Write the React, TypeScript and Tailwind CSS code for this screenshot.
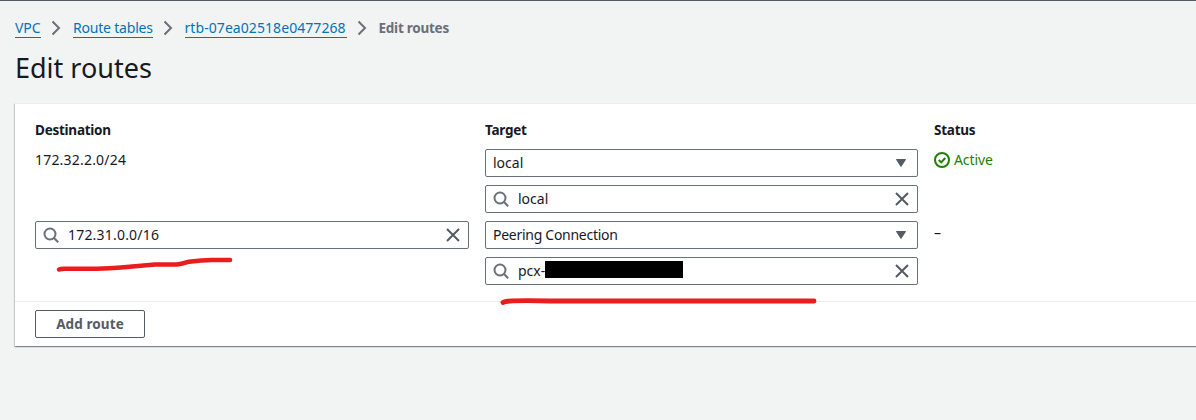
import type { ReactNode } from "react";

function Crumb({ children, className }: { children: string; className: string }) {
  return (
    <>
      <a className={`h-[19px] border-b border-[#0073bb] text-[14px] leading-[18px] whitespace-nowrap text-[#0073bb] ${className}`}>{children}</a>
      <svg className="mt-px mr-[12px] ml-[9px] h-4 w-[11px] shrink-0" viewBox="0 0 11 16" fill="none" stroke="#687078" strokeWidth="2">
        <path d="M2.5 1.5 9 8 2.5 14.5" />
      </svg>
    </>
  );
}

function SearchIcon() {
  return (
    <svg className="mr-[9px] h-4 w-4 shrink-0" viewBox="0 0 16 16" fill="none" stroke="#687078" strokeWidth="2">
      <circle cx="7" cy="7" r="5.5" />
      <path d="m11 11 4.2 4.2" />
    </svg>
  );
}

function CloseIcon() {
  return (
    <svg className="ml-auto h-4 w-4 shrink-0" viewBox="0 0 16 16" fill="none" stroke="#545b64" strokeWidth="2">
      <path d="m2 2 12 12M14 2 2 14" />
    </svg>
  );
}

function SearchField({ children }: { children: ReactNode }) {
  return (
    <div className="flex h-7 w-full shrink-0 items-center rounded-[2px] border border-[#687078] bg-white pr-[7px] pl-[7px] text-[14px] leading-5">
      <SearchIcon />
      {children}
      <CloseIcon />
    </div>
  );
}

function SelectField({ children }: { children: ReactNode }) {
  return (
    <div className="flex h-7 w-full shrink-0 items-center rounded-[2px] border border-[#687078] bg-white pr-2 pl-[7px] text-[14px] leading-5">
      {children}
      <svg className="ml-auto h-4 w-4 shrink-0" viewBox="0 0 16 16">
        <path d="M3.5 4.5h9L8 11.5z" fill="#545b64" stroke="#545b64" strokeWidth="1" strokeLinejoin="round" />
      </svg>
    </div>
  );
}

export default function App() {
  return (
    <main className="relative h-[420px] w-[1196px] overflow-hidden border-t border-[#545b64] bg-[#f2f3f3] pl-[15px] font-['Noto_Sans',sans-serif] text-[13.5px] text-[#16191f]">
      <nav className="mt-[18px] flex h-[19px]">
        <Crumb className="w-[26px] tracking-[-0.1px]">VPC</Crumb>
        <Crumb className="w-[79.5px] tracking-[-0.2px]">Route tables</Crumb>
        <Crumb className="w-[162px] tracking-[0.07px]">rtb-07ea02518e0477268</Crumb>
        <span className="leading-[18px] font-bold tracking-[-0.25px] whitespace-nowrap text-[#687078]">Edit routes</span>
      </nav>
      <h1 className="mt-[12px] h-[36px] text-[27px] leading-[36px]">Edit routes</h1>
      <section className="mt-[17px] h-[243px] w-[1200px] border-t border-[#eaeded] bg-white shadow-[0_1px_1px_0_rgba(0,28,36,0.3),1px_1px_1px_0_rgba(0,28,36,0.15),-1px_1px_1px_0_rgba(0,28,36,0.15)]">
        <div className="grid h-[197px] grid-cols-[434px_433px_200px] grid-rows-[20px_64px_64px] gap-x-4 gap-y-2 pt-[16px] pl-5">
          <b className="leading-5 tracking-[-0.25px]">Destination</b>
          <b className="leading-5 tracking-[-0.25px]">Target</b>
          <b className="leading-5 tracking-[-0.25px]">Status</b>
          <div className="pt-0.5 text-[14px] leading-5 tracking-[0.2px]">172.32.2.0/24</div>
          <div className="flex flex-col gap-2 pt-[1px]">
            <SelectField>local</SelectField>
            <SearchField>local</SearchField>
          </div>
          <div className="flex h-[22px] items-center pt-0.5 text-[14px] leading-5 tracking-[-0.1px] text-[#1d8102]">
            <svg className="mr-1 h-4 w-4" viewBox="0 0 16 16" fill="none" stroke="#1d8102" strokeWidth="2">
              <circle cx="8" cy="8" r="7" />
              <path d="m4.8 8 2.4 2.4 4-4.4" />
            </svg>
            <span>Active</span>
          </div>
          <div className="pt-[1px]">
            <SearchField>
              <span className="tracking-[0.2px]">172.31.0.0/16</span>
            </SearchField>
          </div>
          <div className="flex flex-col gap-2 pt-[1px]">
            <SelectField>
              <span className="tracking-[-0.28px]">Peering Connection</span>
            </SelectField>
            <SearchField>
              <span className="w-[27px]">pcx-</span>
              <span className="mb-[3px] h-[17px] w-[138px] bg-black" />
            </SearchField>
          </div>
          <div className="pt-[3px] text-[14px] leading-5">–</div>
        </div>
        <div className="h-[45px] border-t border-[#eaeded] pt-2 pl-5">
          <button className="h-7 w-[110px] rounded-[2px] border border-[#545b64] font-bold tracking-[0.1px] text-[#545b64]">Add route</button>
        </div>
      </section>
      <svg className="pointer-events-none absolute -top-px left-0 h-[420px] w-[1196px]" fill="none" stroke="#ea1c1c" strokeLinecap="round" strokeLinejoin="round">
        <path d="M59 269.500Q61 268.500 66 268.700L97 268.700Q110 268.500 121 267.500L155 264.500H177Q182 264 189 261.700Q202 260.200 212 260H230" strokeWidth="4.500" />
        <path d="M503 302.500Q505 301.200 512 300.900Q528 300.300 550 301H814" strokeWidth="4.800" />
      </svg>
    </main>
  );
}
